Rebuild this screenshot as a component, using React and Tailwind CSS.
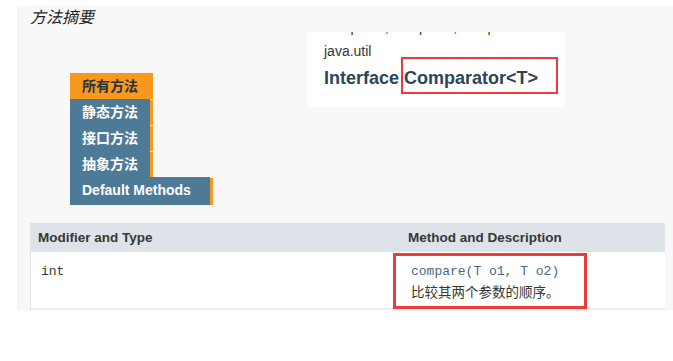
import React from "react";

const tabs = [
  { label: "静态方法", w: "w-[80px]", h: "h-[26px]" },
  { label: "接口方法", w: "w-[80px]", h: "h-[26px]" },
  { label: "抽象方法", w: "w-[80px]", h: "h-[26px]" },
  { label: "Default Methods", w: "w-[140px]", h: "h-[28px]" },
];

export default function App() {
  return (
    <div className="w-[673px] h-[361px] bg-white overflow-hidden pt-[6px] pl-[18px] font-['Liberation_Sans','Noto_Sans_CJK_SC',sans-serif]">
      <div className="bg-[#f8f8f8] border-l border-[#ececec] pl-[11px] pr-[8px] flex flex-col">
        {/* title */}
        <div className="h-[26px] text-[16px] leading-[24px] italic text-[#1f1f1f]">
          方法摘要
        </div>

        <div className="flex items-start">
          {/* tabs */}
          <div className="mt-[41px] ml-[40px] flex flex-col text-[14px] font-bold">
            <div className="w-[83px] h-[26px] leading-[26px] bg-[#f8981d] text-[#253441] pl-[12px]">
              所有方法
            </div>
            {tabs.map((t) => (
              <div key={t.label} className={`flex ${t.h}`}>
                <div className={`${t.w} bg-[#4d7a97] text-white pl-[12px] leading-[27px]`}>
                  {t.label}
                </div>
                <div className="w-[3px] bg-[#f8981d] mt-[1px]" />
              </div>
            ))}
          </div>

          {/* pasted header box */}
          <div className="ml-[94px] w-[258px] h-[75px] bg-white overflow-hidden pl-[17px] text-[#353833]">
            <div className="-mt-[15px] text-[14px] leading-[20px] whitespace-nowrap">
              compact1, compact2, compact3
            </div>
            <div className="text-[14px] leading-[20px] mt-[4px]">java.util</div>
            <div className="text-[18px] leading-[24px] font-bold text-[#2c4557] mt-[5px] whitespace-nowrap">
              Interface{" "}
              <span className="relative">
                Comparator&lt;T&gt;
                <span className="absolute -left-[3px] -top-[11px] w-[157px] h-[37px] border-2 border-[#f03a3a]" />
              </span>
            </div>
          </div>
        </div>

        {/* table */}
        <div className="mt-[18px] border-l border-[#e6e6e6]">
          <div className="grid grid-cols-[370px_1fr] h-[29px] bg-[#dee3e9] text-[13.5px] font-bold text-[#353833] leading-[29px]">
            <div className="pl-[7px]">Modifier and Type</div>
            <div className="pl-[7px]">Method and Description</div>
          </div>
          <div className="grid grid-cols-[370px_1fr] h-[58px] bg-white border-b-2 border-[#ececec] text-[#353833]">
            <div className="pl-[10px] pt-[11px] font-['Liberation_Mono',monospace] text-[13px] leading-[18px]">
              int
            </div>
            <div className="relative pl-[10px] pt-[11px]">
              <div className="font-['Liberation_Mono',monospace] text-[13px] leading-[18px] text-[#4a6782]">
                compare(T o1, T o2)
              </div>
              <div className="text-[13.5px] leading-[20px] mt-[2px]">
                比较其两个参数的顺序。
              </div>
              <div className="absolute left-[-8px] top-[1px] w-[194px] h-[56px] border-[3px] border-[#f03a3a]" />
            </div>
          </div>
        </div>
      </div>
    </div>
  );
}
